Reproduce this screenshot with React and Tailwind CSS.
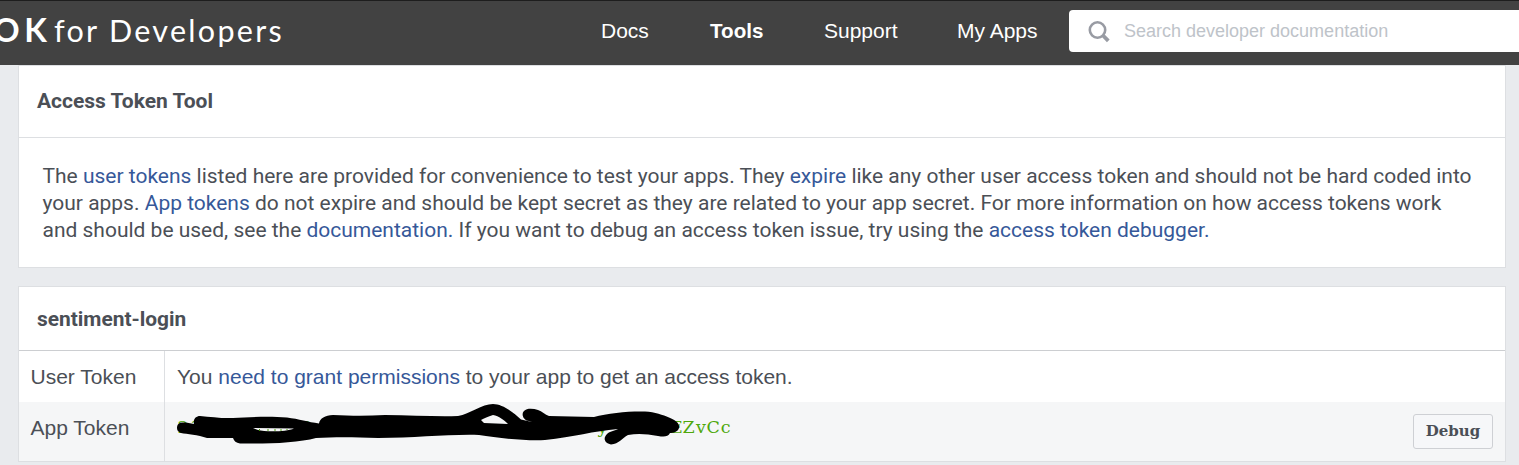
import React from "react";

const NAV = [
  { label: "Docs", cls: "w-[49px] text-[21px]" },
  { label: "Tools", cls: "w-[54px] ml-[60px] text-[20.6px] font-bold" },
  { label: "Support", cls: "w-[74px] ml-[60px] text-[21px]" },
  { label: "My Apps", cls: "w-[82px] ml-[59px] text-[21px]" },
];

const TOKEN = "21        2                       y     EZvCc";

function Link({ children }) {
  return <a className="text-[#365899]">{children}</a>;
}

function Header() {
  return (
    <header className="flex h-[65px] items-start overflow-hidden border-t border-[#1d1d1d] bg-[#424242] text-white">
      <div className="-ml-[7px] flex w-[608px] shrink-0 items-baseline pt-[7px] font-['Lato',sans-serif] whitespace-nowrap">
        <span className="w-[61px] text-[33px] leading-[42px] font-bold tracking-[4.5px]">OK</span>
        <span className="text-[30.5px] leading-[42px] tracking-[2.3px]">for Developers</span>
      </div>
      <nav className="flex pt-[15px] leading-[30px] whitespace-nowrap">
        {NAV.map((n) => (
          <a key={n.label} className={n.cls}>{n.label}</a>
        ))}
      </nav>
      <div className="mt-[9px] ml-[30px] flex h-[42px] grow items-center rounded-l-[4px] bg-white pl-[19px]">
        <svg width="24" height="24" viewBox="0 0 24 24" fill="none" stroke="#989ba3" className="shrink-0">
          <circle cx="9.500" cy="11" r="7.7" strokeWidth="2.6" />
          <path d="M15 16.500L20.300 21.8" strokeWidth="3.8" />
        </svg>
        <span className="ml-[12px] text-[18px] whitespace-nowrap text-[#bec3c9]">Search developer documentation</span>
      </div>
    </header>
  );
}

function Redaction() {
  return (
    <svg className="absolute top-0 left-0" width="530" height="59" viewBox="165 402 530 59">
      <path d="M177 428C177 423 180 422 186 422.500L194 424C193 419 196 416 200 416C211 417 222 418.500 233 418C249 417 270 416 287 417.500C299 419 308 422 319 423.500C320 418 325 415.500 333 415C352 416 368 416 385 415C412 415 437 417 458 416C470 414 482 404 493 404C503 404 514 413 521 419.500L532 422L529 421C523 420 521 414 524 411C527 408 533 408.500 538 410C542 411 545 415 549 416L594 417C608 413 630 411 645 411.500C655 412 663 415 669 417.500C676 420 680 424 679 428C678 432 673 433 670 433C668 437 664 437 658 436C647 434 638 433 628 435C622 438 619 444 611 444.500C604 443 603 438 607 434C610 431 614 431 618 429C593 431 574 437 545 440C525 441 497 438 479 435C450 434 416 438 378 438C353 437 333 437 316 438C298 443 266 444 240 443.500C236 443 234 441 233 438L207 438C198 435 187 434 181 433C178 432 177 430 177 428Z" fill="#000" />
      <path d="M253 428L294 428.500C286 432 265 432 258 430Z" fill="#f5f6f7" />
      <path d="M481 420C484 418 488 417 493 415C499 416 504 420 508 424L484 423Z" fill="#f5f6f7" />
      <path d="M259.500 429V431M268 429V431M275 429V431M281 429V431M287 429V430" stroke="#4d9f0c" strokeWidth="1" />
    </svg>
  );
}

export default function App() {
  return (
    <div className="h-[465px] overflow-hidden bg-[#e9ebee] font-['Liberation_Sans',Arial,sans-serif] text-[#4b4f56]">
      <Header />
      <main className="ml-[18px] w-[1488px]">
        <section className="h-[203px] border border-[#dddfe2] bg-white font-['Roboto',sans-serif]">
          <h1 className="flex h-[72px] items-center border-b border-[#dddfe2] pt-px pl-[18px] text-[21px] font-bold">Access Token Tool</h1>
          <div className="pt-[25px] pl-[23.5px] text-[20.995px] leading-[27px] whitespace-nowrap">
            <p>The <Link>user tokens</Link> listed here are provided for convenience to test your apps. They <Link>expire</Link> like any other user access token and should not be hard coded into</p>
            <p>your apps. <Link>App tokens</Link> do not expire and should be kept secret as they are related to your app secret. For more information on how access tokens work</p>
            <p>and should be used, see the <Link>documentation.</Link> If you want to debug an access token issue, try using the <Link>access token debugger.</Link></p>
          </div>
        </section>
        <section className="mt-[18px] h-[176px] border border-[#dddfe2] bg-white">
          <h2 className="flex h-[64px] items-center border-b border-[#ccced1] pt-[2px] pl-[18px] font-['Roboto',sans-serif] text-[20.9px] font-bold">sentiment-login</h2>
          <div className="grid grid-cols-[146px_1fr] text-[21px] whitespace-nowrap">
            <div className="flex h-[51px] items-center border-r border-[#dddfe2] pl-[11.5px]">User Token</div>
            <div className="flex items-center pl-[12px]"><p>You <Link>need to grant permissions</Link> to your app to get an access token.</p></div>
            <div className="h-[59px] border-r border-[#dddfe2] bg-[#f5f6f7] pt-[11px] pl-[11.5px] leading-[30px]">App Token</div>
            <div className="relative flex items-start justify-between bg-[#f5f6f7] pr-[12px] pl-[12px]">
              <code className="flex pt-[10px] font-['DejaVu_Serif',serif] text-[17.5px] leading-[30px] whitespace-pre text-[#4fa80c]">
                {TOKEN.split("").map((ch, i) => (
                  <span key={i} className="flex w-[12.33px] justify-center">{ch}</span>
                ))}
              </code>
              <Redaction />
              <button className="mt-[12px] h-[35px] w-[80px] rounded-[3px] border border-[#ced0d4] bg-[#f6f7f9] pb-px font-['DejaVu_Serif',serif] text-[15px] font-bold">Debug</button>
            </div>
          </div>
        </section>
      </main>
    </div>
  );
}
